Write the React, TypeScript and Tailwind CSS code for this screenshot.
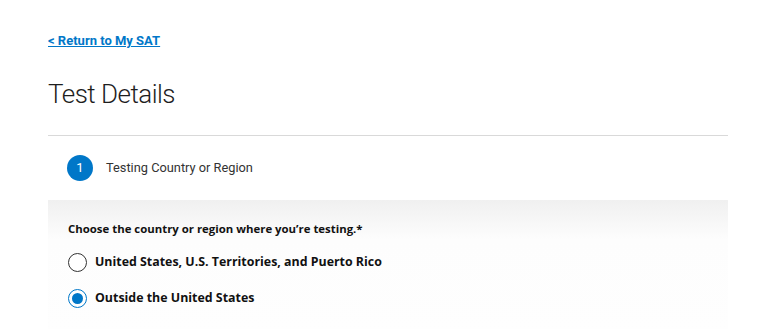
import { useState } from "react";

const options = [
  { id: "us", label: "United States, U.S. Territories, and Puerto Rico" },
  { id: "intl", label: "Outside the United States" },
];

export default function App() {
  const [country, setCountry] = useState("intl");

  return (
    <div className="min-h-[329px] bg-white font-['Roboto',sans-serif] text-[#1e1e1e]">
      <div className="ml-12 mr-8 pt-[31px]">
        <a href="#" className="block w-fit text-[13px] font-bold leading-[20px] text-[#0077c8] underline">
          &lt; Return to My SAT
        </a>
        <h1 className="mt-[25px] text-[26px] font-light leading-[36px] tracking-[-0.02em] text-[#1e1e1e]">
          Test Details
        </h1>
        <div className="mt-[23px] border-t border-[#d9d9d9]" />

        {/* Step header */}
        <div className="flex h-[64px] items-center gap-[13px] pl-[19px]">
          <span className="flex h-[26px] w-[26px] items-center justify-center rounded-full bg-[#0077c8] text-[13px] text-white">
            1
          </span>
          <span className="text-[12.8px] text-[#333]">Testing Country or Region</span>
        </div>

        {/* Question panel */}
        <div className="bg-gradient-to-b from-[#f0f0f0] via-[#fdfdfd] via-[30%] to-[#fefefe] px-5 pb-6 pt-[20px] font-['Open_Sans',sans-serif]">
          <p className="text-[11.4px] font-bold text-[#111]">
            Choose the country or region where you’re testing.*
          </p>
          <div className="mt-[15px] flex flex-col gap-[16px]">
            {options.map((o) => (
              <label key={o.id} className="flex cursor-pointer items-center gap-[8px]">
                <span
                  onClick={() => setCountry(o.id)}
                  className={`flex h-[19px] w-[19px] items-center justify-center rounded-full border-[1.5px] ${
                    country === o.id ? "border-[#0077c8]" : "border-[#333]"
                  } bg-white`}
                >
                  {country === o.id && <span className="h-[11px] w-[11px] rounded-full bg-[#0077c8]" />}
                </span>
                <span className="text-[12.4px] font-bold leading-[20px] text-[#111]">{o.label}</span>
              </label>
            ))}
          </div>
        </div>
      </div>
    </div>
  );
}
